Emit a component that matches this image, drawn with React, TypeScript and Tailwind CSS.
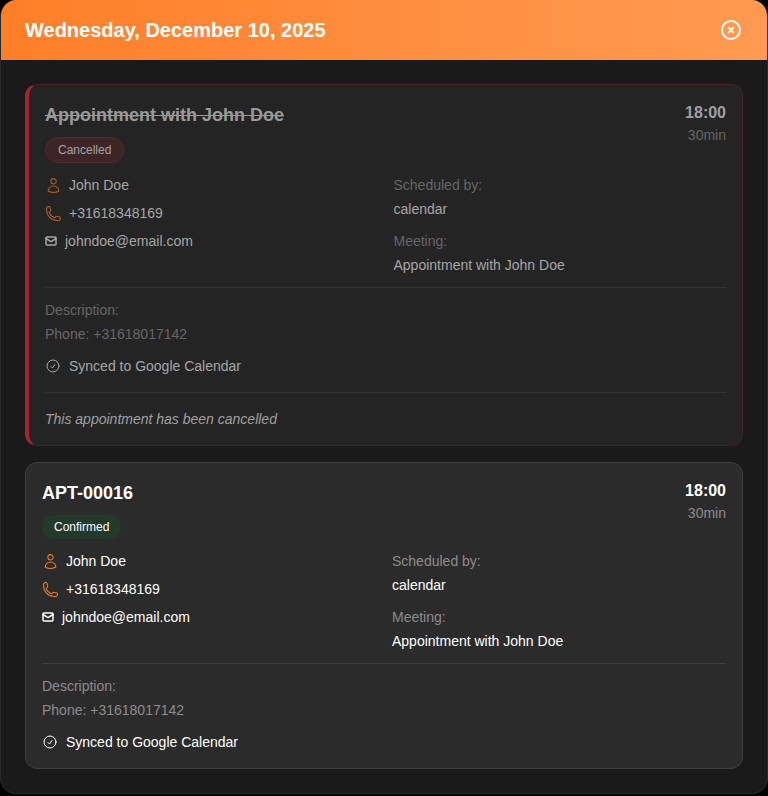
import { Mail } from 'lucide-react';

function UserIcon({ className }: { className: string }) {
    return (
        <svg viewBox="0 0 24 24" fill="none" stroke="currentColor" strokeWidth="1.5" className={className}>
            <path d="M15.75 6a3.75 3.75 0 1 1-7.5 0 3.75 3.75 0 0 1 7.5 0ZM4.5 20.1a7.5 7.5 0 0 1 15 0 17.9 17.9 0 0 1-7.5 1.65c-2.68 0-5.22-.59-7.5-1.65Z" strokeLinecap="round" strokeLinejoin="round" />
        </svg>
    );
}

function PhoneIcon({ className }: { className: string }) {
    return (
        <svg viewBox="0 0 24 24" fill="none" stroke="currentColor" strokeWidth="1.5" className={className}>
            <path d="M2.25 6.75c0 8.28 6.72 15 15 15h2.25a2.25 2.25 0 0 0 2.25-2.25v-1.37c0-.52-.35-.97-.85-1.09l-4.42-1.11c-.44-.11-.9.06-1.17.42l-.97 1.29c-.28.38-.77.54-1.21.38a12.04 12.04 0 0 1-7.14-7.14c-.16-.44 0-.93.38-1.21l1.29-.97c.37-.27.53-.73.42-1.17L6.96 3.1a1.13 1.13 0 0 0-1.09-.85H4.5A2.25 2.25 0 0 0 2.25 4.5v2.25Z" strokeLinecap="round" strokeLinejoin="round" />
        </svg>
    );
}

function CheckCircleIcon({ className }: { className: string }) {
    return (
        <svg viewBox="0 0 24 24" fill="none" stroke="currentColor" strokeWidth="1.5" className={className}>
            <path d="M9 12.75 11.25 15 15 9.75M21 12a9 9 0 1 1-18 0 9 9 0 0 1 18 0Z" strokeLinecap="round" strokeLinejoin="round" />
        </svg>
    );
}

function CloseIcon() {
    return (
        <svg viewBox="0 0 24 24" fill="none" stroke="currentColor" strokeWidth="2" className="w-6 h-6 text-white">
            <circle cx="12" cy="12" r="9" />
            <path d="m9.75 9.75 4.5 4.5m0-4.5-4.5 4.5" strokeLinecap="round" strokeLinejoin="round" />
        </svg>
    );
}

function AppointmentCard({ title, cancelled }: { title: string; cancelled?: boolean }) {
    const muted = cancelled ? 'text-[#666666]' : 'text-[#8c8c8c]';
    const body = cancelled ? 'text-[#a6a6a6]' : 'text-white';
    const accent = cancelled ? 'text-[#a85f22]' : 'text-[#ea7a23]';
    const line = cancelled ? 'border-[#333333]' : 'border-[#3f3f3f]';

    return (
        <div
            className={`rounded-xl border pt-4 px-4 ${
                cancelled
                    ? 'bg-[#242424] border-[#4a1f24] border-l-4 border-l-[#a3252f] pb-4'
                    : 'bg-[#2b2b2b] border-[#3f3f3f] pb-3'
            }`}
        >
            <div className="flex justify-between items-start">
                <div>
                    <h3 className={`text-lg font-bold leading-7 ${cancelled ? 'text-[#999999] line-through' : 'text-white'}`}>{title}</h3>
                    <span
                        className={`inline-flex items-center mt-[8px] px-3 rounded-full text-xs font-medium ${
                            cancelled
                                ? 'h-[26px] bg-[#3d2526] border border-[#552b2d] text-[#a3a3a3]'
                                : 'h-6 bg-[#22392c] text-white'
                        }`}
                    >
                        {cancelled ? 'Cancelled' : 'Confirmed'}
                    </span>
                </div>
                <div className="text-right">
                    <div className={`text-base font-bold leading-6 ${cancelled ? 'text-[#a0a0a0]' : 'text-white'}`}>18:00</div>
                    <div className={`text-sm leading-5 ${muted}`}>30min</div>
                </div>
            </div>

            <div className="grid grid-cols-2 gap-4 mt-[8px] text-sm">
                <div className={body}>
                    <div className="flex items-center h-7">
                        <UserIcon className={`w-[17px] h-[17px] mr-[7px] ${accent}`} />
                        John Doe
                    </div>
                    <div className="flex items-center h-7">
                        <PhoneIcon className={`w-[17px] h-[17px] mr-[7px] ${accent}`} />
                        +31618348169
                    </div>
                    <div className="flex items-center h-7">
                        <Mail strokeWidth={3} className={`w-3 h-3 mr-2 ${body}`} />
                        johndoe@email.com
                    </div>
                </div>
                <div className="flex flex-col gap-2 mt-[2px] leading-6">
                    <div>
                        <div className={muted}>Scheduled by:</div>
                        <div className={body}>calendar</div>
                    </div>
                    <div>
                        <div className={muted}>Meeting:</div>
                        <div className={body}>Appointment with John Doe</div>
                    </div>
                </div>
            </div>

            <div className={`border-t mt-[10px] pt-[8px] text-sm ${line}`}>
                <div className={`leading-6 mt-[2px] ${muted}`}>Description:</div>
                <div className={`leading-6 ${muted}`}>Phone: +31618017142</div>
                <div className={`flex items-center h-7 mt-[6px] ${body}`}>
                    <CheckCircleIcon className="w-4 h-4 mr-2" />
                    Synced to Google Calendar
                </div>
            </div>

            {cancelled && (
                <div className={`border-t mt-[12px] pt-4 text-sm italic leading-5 text-[#a0a0a0] ${line}`}>
                    This appointment has been cancelled
                </div>
            )}
        </div>
    );
}

export default function App() {
    return (
        <div className="w-[768px] h-[796px] bg-black font-['Liberation_Sans',Arial,sans-serif]">
            <div className="h-[794px] rounded-2xl border border-[#2a2a2a] border-t-0 bg-[#1a1a1a] overflow-hidden">
                <div className="flex items-center justify-between h-[60px] px-6 bg-gradient-to-r from-[#ff7f27] to-[#ff9a50]">
                    <h2 className="text-xl font-bold text-white">Wednesday, December 10, 2025</h2>
                    <CloseIcon />
                </div>
                <div className="flex flex-col gap-4 px-6 pt-6">
                    <AppointmentCard title="Appointment with John Doe" cancelled />
                    <AppointmentCard title="APT-00016" />
                </div>
            </div>
        </div>
    );
}
